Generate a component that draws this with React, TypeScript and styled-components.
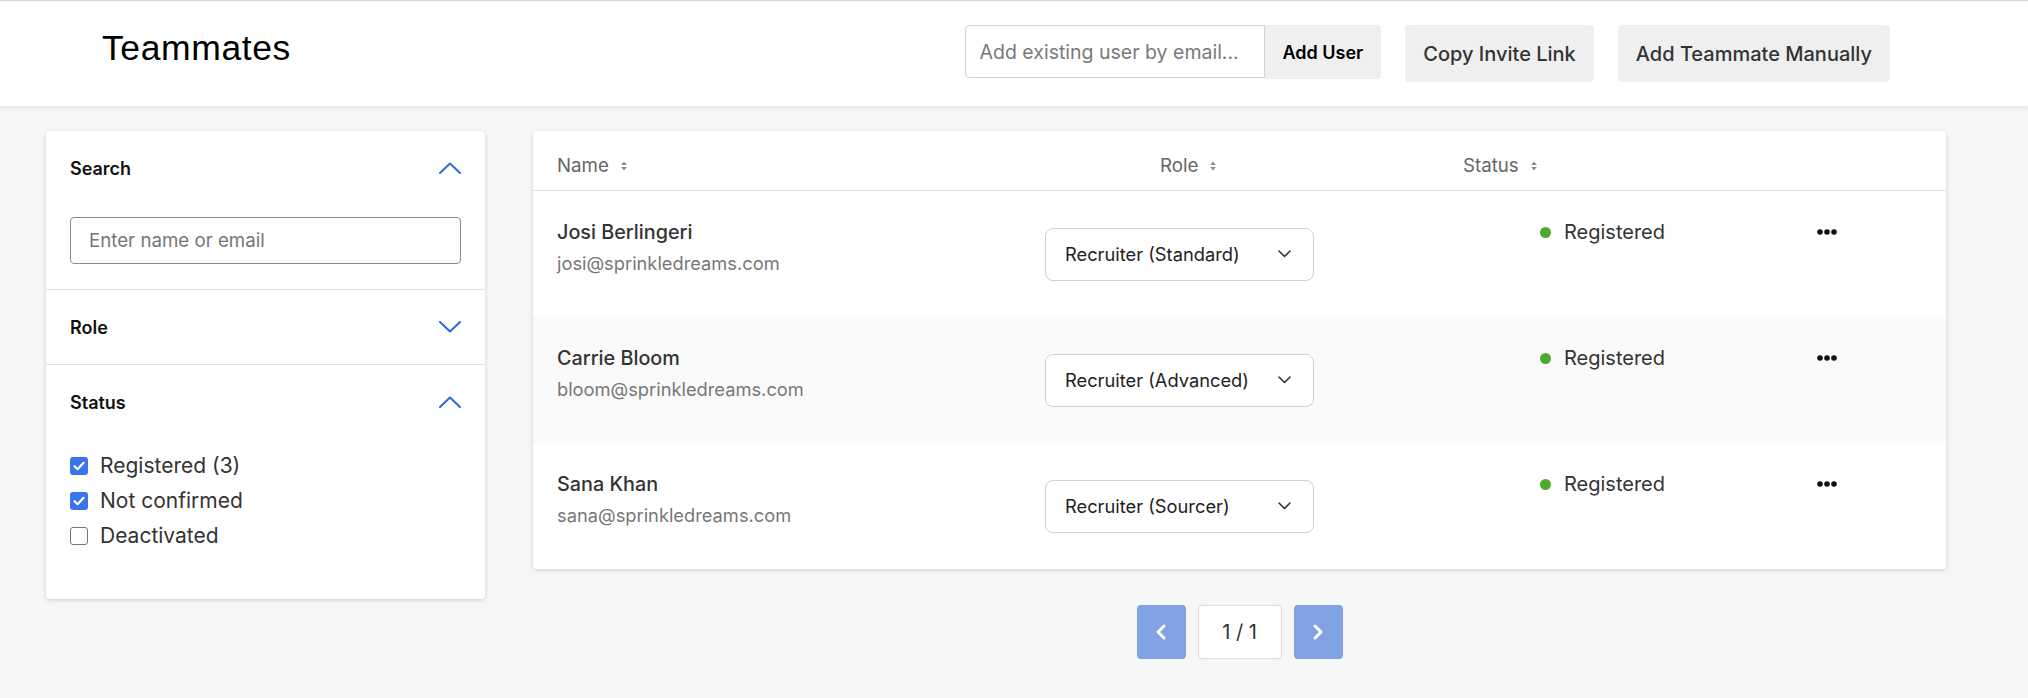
import { createGlobalStyle, styled } from 'styled-components';

const GlobalStyle = createGlobalStyle`
  html, body {
    margin: 0;
    padding: 0;
    background: #f6f6f6;
    font-family: Inter, "Noto Sans", sans-serif;
    color: #333;
  }
  * { box-sizing: border-box; }
`;

const Color = {
  BLUE: '#2d69da',
  CHECK: '#3b74ea',
  PAGER: '#80a1e3',
  GREEN: '#4fa92f',
  BORDER: '#e2e2e2',
  BUTTON: '#efefef',
};

type Member = { name: string; email: string; role: string };

const MEMBERS: Member[] = [
  { name: 'Josi Berlingeri', email: 'josi@sprinkledreams.com', role: 'Recruiter (Standard)' },
  { name: 'Carrie Bloom', email: 'bloom@sprinkledreams.com', role: 'Recruiter (Advanced)' },
  { name: 'Sana Khan', email: 'sana@sprinkledreams.com', role: 'Recruiter (Sourcer)' },
];

const STATUSES = [
  { label: 'Registered (3)', checked: true },
  { label: 'Not confirmed', checked: true },
  { label: 'Deactivated', checked: false },
];

/* ---------- top bar ---------- */

const TopBar = styled.header`
  display: flex;
  align-items: flex-start;
  height: 106px;
  padding: 24px 138px 0 102px;
  background: #fff;
  border-top: 1px solid #d8d8d8;
  box-shadow: 0 2px 5px rgba(0, 0, 0, 0.08);
`;

const Title = styled.h1`
  margin: 6px 0 0;
  font-family: 'Liberation Sans', Arial, sans-serif;
  font-size: 35.5px;
  font-weight: 400;
  letter-spacing: 0.6px;
  color: #000;
  line-height: 1;
`;

const Actions = styled.div`
  display: flex;
  align-items: flex-start;
  gap: 24px;
  margin-left: auto;
`;

const InviteGroup = styled.div`
  display: flex;
`;

const EmailInput = styled.input`
  width: 300px;
  height: 53px;
  padding: 0 14px;
  border: 1px solid #d2d2d2;
  border-radius: 4px 0 0 4px;
  font-family: inherit;
  font-size: 19.5px;
  color: #333;
  outline: none;

  &::placeholder {
    color: #7a7a7a;
  }
`;

const Button = styled.button<{ $strong?: boolean; $joined?: boolean; $height: number }>`
  height: ${({ $height }) => $height}px;
  padding: 0 18px;
  border: none;
  border-radius: ${({ $joined }) => ($joined ? '0 4px 4px 0' : '4px')};
  background: ${Color.BUTTON};
  font-family: inherit;
  font-size: ${({ $strong }) => ($strong ? 18 : 20)}px;
  font-weight: ${({ $strong }) => ($strong ? 600 : 500)};
  color: ${({ $strong }) => ($strong ? '#000' : '#333')};
  white-space: nowrap;
  cursor: pointer;
`;

/* ---------- layout ---------- */

const Main = styled.main`
  display: flex;
  align-items: flex-start;
  gap: 48px;
  padding: 25px 82px 40px 46px;
`;

const Card = styled.div`
  background: #fff;
  border-radius: 4px;
  box-shadow: 0 1px 4px rgba(0, 0, 0, 0.16);
`;

/* ---------- sidebar ---------- */

const Sidebar = styled(Card)`
  width: 439px;
  flex-shrink: 0;
`;

const Section = styled.section`
  & + & {
    border-top: 1px solid ${Color.BORDER};
  }
`;

const SectionHead = styled.div`
  display: flex;
  align-items: center;
  justify-content: space-between;
  height: 74px;
  padding: 0 24px;
  font-size: 18px;
  font-weight: 600;
  color: #111;
`;

const SectionBody = styled.div<{ $top: number; $bottom: number }>`
  padding: ${({ $top }) => $top}px 24px ${({ $bottom }) => $bottom}px;
`;

const SearchInput = styled.input`
  width: 100%;
  height: 47px;
  padding: 0 18px;
  border: 1px solid #8a8a8a;
  border-radius: 4px;
  font-family: inherit;
  font-size: 18.7px;
  outline: none;

  &::placeholder {
    color: #767676;
  }
`;

const CheckRow = styled.label`
  display: flex;
  align-items: center;
  gap: 12px;
  height: 35px;
  font-size: 21px;
  color: #333;
`;

const Box = styled.span<{ $checked: boolean }>`
  display: flex;
  align-items: center;
  justify-content: center;
  width: 18px;
  height: 18px;
  border-radius: 3px;
  background: ${({ $checked }) => ($checked ? Color.CHECK : '#fff')};
  border: ${({ $checked }) => ($checked ? 'none' : '1.5px solid #767676')};
`;

const Chevron = ({ up, color = Color.BLUE }: { up?: boolean; color?: string }) => (
  <svg width="22" height="12" viewBox="0 0 22 12" fill="none">
    <polyline
      points={up ? '1,11 11,1.5 21,11' : '1,1 11,10.5 21,1'}
      stroke={color}
      strokeWidth="2"
      strokeLinecap="round"
      strokeLinejoin="round"
    />
  </svg>
);

const Check = () => (
  <svg width="12" height="10" viewBox="0 0 12 10" fill="none">
    <polyline points="1.5,5.2 4.6,8.2 10.5,1.8" stroke="#fff" strokeWidth="2.2" strokeLinecap="round" strokeLinejoin="round" />
  </svg>
);

/* ---------- table ---------- */

const TableArea = styled.div`
  flex: 1;
  display: flex;
  flex-direction: column;
  align-items: center;
  gap: 36px;
`;

const Table = styled(Card)`
  width: 100%;
  overflow: hidden;
`;

const HeadRow = styled.div`
  display: grid;
  grid-template-columns: 603px 303px 1fr;
  align-items: center;
  height: 60px;
  padding: 10px 0 0 24px;
  border-bottom: 1px solid ${Color.BORDER};
  font-size: 18.7px;
  color: #666;
`;

const HeadCell = styled.div`
  display: flex;
  align-items: center;
  gap: 12px;
`;

const Row = styled.div<{ $shaded: boolean }>`
  display: grid;
  grid-template-columns: 488px 495px 277px 1fr;
  align-items: start;
  height: 126px;
  padding-left: 24px;
  background: ${({ $shaded }) => ($shaded ? '#fafafa' : '#fff')};
`;

const NameCell = styled.div`
  padding-top: 29px;
`;

const Name = styled.div`
  font-size: 19.8px;
  font-weight: 500;
  line-height: 24px;
  color: #333;
`;

const Email = styled.div`
  margin-top: 7px;
  font-size: 18.3px;
  line-height: 24px;
  color: #777;
`;

const RoleSelect = styled.div`
  align-self: center;
  display: flex;
  align-items: center;
  justify-content: space-between;
  width: 269px;
  height: 53px;
  padding: 0 22px 0 19px;
  border: 1px solid #d0d0d0;
  border-radius: 8px;
  background: #fff;
  font-size: 18.3px;
  color: #222;
`;

const Status = styled.div`
  display: flex;
  align-items: center;
  gap: 13px;
  padding-top: 29px;
  line-height: 24px;
  font-size: 20px;
  color: #333;
`;

const Dot = styled.span`
  width: 11px;
  height: 11px;
  border-radius: 50%;
  background: ${Color.GREEN};
`;

const More = styled.div`
  display: flex;
  align-items: center;
  height: 24px;
  margin-top: 29px;
`;

const SortIcon = () => (
  <svg width="6" height="10" viewBox="0 0 6 10">
    <polygon points="3,0.5 5.8,4 0.2,4" fill="#888" />
    <polygon points="3,9.5 5.8,6 0.2,6" fill="#888" />
  </svg>
);

const SmallChevron = () => (
  <svg width="13" height="8" viewBox="0 0 13 8" fill="none">
    <polyline points="1,1 6.5,6.5 12,1" stroke="#333" strokeWidth="1.6" strokeLinecap="round" strokeLinejoin="round" />
  </svg>
);

const Dots = () => (
  <svg width="20" height="6" viewBox="0 0 20 6">
    <circle cx="3" cy="3" r="2.8" fill="#111" />
    <circle cx="10" cy="3" r="2.8" fill="#111" />
    <circle cx="17" cy="3" r="2.8" fill="#111" />
  </svg>
);

/* ---------- pager ---------- */

const Pager = styled.div`
  display: flex;
  gap: 12px;
`;

const PageButton = styled.button`
  display: flex;
  align-items: center;
  justify-content: center;
  width: 49px;
  height: 54px;
  border: none;
  border-radius: 4px;
  background: ${Color.PAGER};
`;

const PageLabel = styled.div`
  display: flex;
  align-items: center;
  justify-content: center;
  width: 84px;
  height: 54px;
  border: 1px solid #dcdcdc;
  border-radius: 4px;
  background: #fff;
  font-size: 20px;
  color: #333;
`;

const PagerArrow = ({ left }: { left?: boolean }) => (
  <svg width="10" height="16" viewBox="0 0 10 16" fill="none">
    <polyline
      points={left ? '8,2 2,8 8,14' : '2,2 8,8 2,14'}
      stroke="#fff"
      strokeWidth="3"
      strokeLinecap="round"
      strokeLinejoin="round"
    />
  </svg>
);

const App = () => {
  return (
    <>
      <GlobalStyle />
      <TopBar>
        <Title>Teammates</Title>
        <Actions>
          <InviteGroup>
            <EmailInput placeholder="Add existing user by email..." />
            <Button $strong $joined $height={54}>
              Add User
            </Button>
          </InviteGroup>
          <Button $height={57}>Copy Invite Link</Button>
          <Button $height={57}>Add Teammate Manually</Button>
        </Actions>
      </TopBar>

      <Main>
        <Sidebar>
          <Section>
            <SectionHead>
              Search
              <Chevron up />
            </SectionHead>
            <SectionBody $top={12} $bottom={25}>
              <SearchInput placeholder="Enter name or email" />
            </SectionBody>
          </Section>
          <Section>
            <SectionHead>
              Role
              <Chevron />
            </SectionHead>
          </Section>
          <Section>
            <SectionHead>
              Status
              <Chevron up />
            </SectionHead>
            <SectionBody $top={9} $bottom={46}>
              {STATUSES.map((s) => (
                <CheckRow key={s.label}>
                  <Box $checked={s.checked}>{s.checked && <Check />}</Box>
                  {s.label}
                </CheckRow>
              ))}
            </SectionBody>
          </Section>
        </Sidebar>

        <TableArea>
          <Table>
            <HeadRow>
              <HeadCell>
                Name <SortIcon />
              </HeadCell>
              <HeadCell>
                Role <SortIcon />
              </HeadCell>
              <HeadCell>
                Status <SortIcon />
              </HeadCell>
            </HeadRow>
            {MEMBERS.map((m, i) => (
              <Row key={m.email} $shaded={i % 2 === 1}>
                <NameCell>
                  <Name>{m.name}</Name>
                  <Email>{m.email}</Email>
                </NameCell>
                <RoleSelect>
                  {m.role}
                  <SmallChevron />
                </RoleSelect>
                <Status>
                  <Dot />
                  Registered
                </Status>
                <More>
                  <Dots />
                </More>
              </Row>
            ))}
          </Table>
          <Pager>
            <PageButton>
              <PagerArrow left />
            </PageButton>
            <PageLabel>1 / 1</PageLabel>
            <PageButton>
              <PagerArrow />
            </PageButton>
          </Pager>
        </TableArea>
      </Main>
    </>
  );
};

export default App;
